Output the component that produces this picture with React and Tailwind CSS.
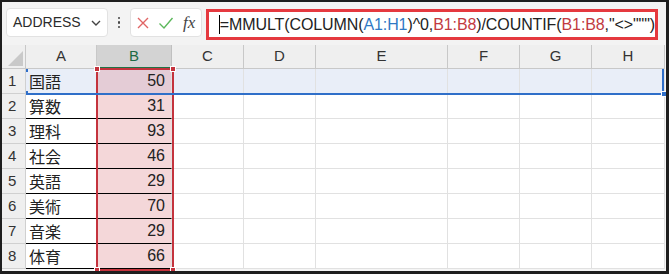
import React from "react";

const cols = ["A", "B", "C", "D", "E", "F", "G", "H"];
const data = [
  ["国語", 50],
  ["算数", 31],
  ["理科", 93],
  ["社会", 46],
  ["英語", 29],
  ["美術", 70],
  ["音楽", 29],
  ["体育", 66],
];

const font = { fontFamily: '"Liberation Sans", "Noto Sans CJK JP", sans-serif' };

export default function App() {
  return (
    <div className="w-[669px] h-[274px] bg-[#1e1e1e] pt-[2px] pl-[2px] pr-[3px] pb-[3px] overflow-hidden" style={font}>
      <div className="relative w-full h-full bg-[#f5f5f5] flex flex-col overflow-hidden">
        {/* formula bar */}
        <div className="h-[43px] shrink-0 bg-[#f3f3f3] flex items-start pt-[6px] pl-[4px]">
          <div className="w-[102px] h-[29px] bg-white rounded-[4px] border border-[#e2e2e2] flex items-center pl-[6px] pr-[5px] justify-between">
            <span className="text-[14px] text-[#2b2b2b]">ADDRESS</span>
            <svg width="12" height="8" viewBox="0 0 12 8"><path d="M2 2l4 4 4-4" fill="none" stroke="#444" strokeWidth="1.4" /></svg>
          </div>
          <div className="w-[22px] h-[29px] flex flex-col items-center justify-center gap-[2px]">
            <span className="w-[2.5px] h-[2.5px] bg-[#444] rounded-full" />
            <span className="w-[2.5px] h-[2.5px] bg-[#444] rounded-full" />
            <span className="w-[2.5px] h-[2.5px] bg-[#444] rounded-full" />
          </div>
          <div className="w-[72px] h-[29px] bg-white rounded-[4px] border border-[#e2e2e2] flex items-center pl-[5px] gap-[8px]">
            <svg width="14" height="14" viewBox="0 0 14 14"><path d="M2 2l10 10M12 2L2 12" stroke="#e06565" strokeWidth="1.4" /></svg>
            <svg width="16" height="14" viewBox="0 0 16 14"><path d="M1.5 7.5l4.5 4.5L14.5 2" fill="none" stroke="#5cb85c" strokeWidth="1.4" /></svg>
            <span className="text-[17px] italic text-[#444] ml-[1px]" style={{ fontFamily: '"Liberation Serif", serif' }}>
              <i>f</i>x
            </span>
          </div>
          <div className="ml-[4px] mt-[1px] w-[452px] h-[31px] border-[3px] border-[#e5393f] bg-white flex items-center pl-[10px]">
            <span className="w-[1px] h-[19px] bg-black" />
            <span className="text-[16px] text-[#222] whitespace-nowrap tracking-[-0.1px]">
              =MMULT(COLUMN(<span className="text-[#2f78c4]">A1:H1</span>)^0,<span className="text-[#c23a3f]">B1:B8</span>)/COUNTIF(<span className="text-[#c23a3f]">B1:B8</span>,"&lt;&gt;""")
            </span>
          </div>
        </div>
        {/* grid */}
        <div className="grid grid-cols-[24px_71px_75px_72px_72px_132px_72px_72px_73px] grid-rows-[24px_repeat(8,25px)]">
          <div className="bg-[#efefef] border-r border-b border-[#c8c8c8] relative">
            <svg className="absolute right-[2px] bottom-[2px]" width="15" height="15" viewBox="0 0 15 15"><path d="M15 0V15H0Z" fill="#c9c9c9" /></svg>
          </div>
          {cols.map((c) => (
            <div
              key={c}
              className={
                c === "B"
                  ? "bg-[#d3d3d3] border-r border-[#c0c0c0] border-b-2 border-b-[#217346] flex items-center justify-center text-[15px] text-[#1d6b45]"
                  : "bg-[#efefef] border-r border-b border-[#c8c8c8] flex items-center justify-center text-[15px] text-[#333]"
              }
            >
              {c}
            </div>
          ))}
          {data.map(([name, val], i) => (
            <React.Fragment key={i}>
              <div className="bg-[#efefef] border-r border-b border-[#d0d0d0] flex items-center pl-[6px] text-[15px] text-[#333]">{i + 1}</div>
              <div className={(i === 0 ? "bg-[#e9eef8] " : "bg-white ") + "border-r border-[#e1e1e1] border-b border-b-black flex items-center pl-[3px] text-[16px] text-[#222]"} style={{ fontFamily: '"Noto Sans CJK JP", sans-serif' }}>
                {name}
              </div>
              <div className={(i === 0 ? "bg-[#e4ccd6] " : "bg-[#f4d7d9] ") + "border-r border-[#e1e1e1] border-b border-b-black flex items-center justify-end pr-[6px] text-[16px] text-[#222]"}>
                {val}
              </div>
              {cols.slice(2).map((c) => (
                <div key={c} className={(i === 0 ? "bg-[#e9eef8] " : "bg-white ") + "border-r border-b border-[#e1e1e1]"} />
              ))}
            </React.Fragment>
          ))}
        </div>
        {/* red range highlight B1:B8 */}
        <div className="absolute left-[94px] top-[66px] w-[78px] h-[203px] border-2 border-[#c4333d] pointer-events-none">
          <span className="absolute -left-[4px] -top-[4px] w-[6px] h-[6px] bg-[#c4333d] border border-white" />
          <span className="absolute -right-[4px] -top-[4px] w-[6px] h-[6px] bg-[#c4333d] border border-white" />
          <span className="absolute -left-[4px] -bottom-[4px] w-[6px] h-[6px] bg-[#c4333d] border border-white" />
          <span className="absolute -right-[4px] -bottom-[4px] w-[6px] h-[6px] bg-[#c4333d] border border-white" />
        </div>
        {/* blue selection A1:H1 */}
        <div className="absolute left-[24px] top-[91px] w-[640px] h-[2px] bg-[#2f6fc9]" />
        <div className="absolute left-[660px] top-[67px] w-[2px] h-[25px] bg-[#2f6fc9]" />
        <div className="absolute left-[24px] top-[67px] w-[2px] h-[3px] bg-[#2f6fc9]" />
        <div className="absolute left-[24px] top-[89px] w-[2px] h-[3px] bg-[#2f6fc9]" />
        <div className="absolute left-[659px] top-[89px] w-[6px] h-[6px] bg-[#2f6fc9] border border-white" />
      </div>
    </div>
  );
}
